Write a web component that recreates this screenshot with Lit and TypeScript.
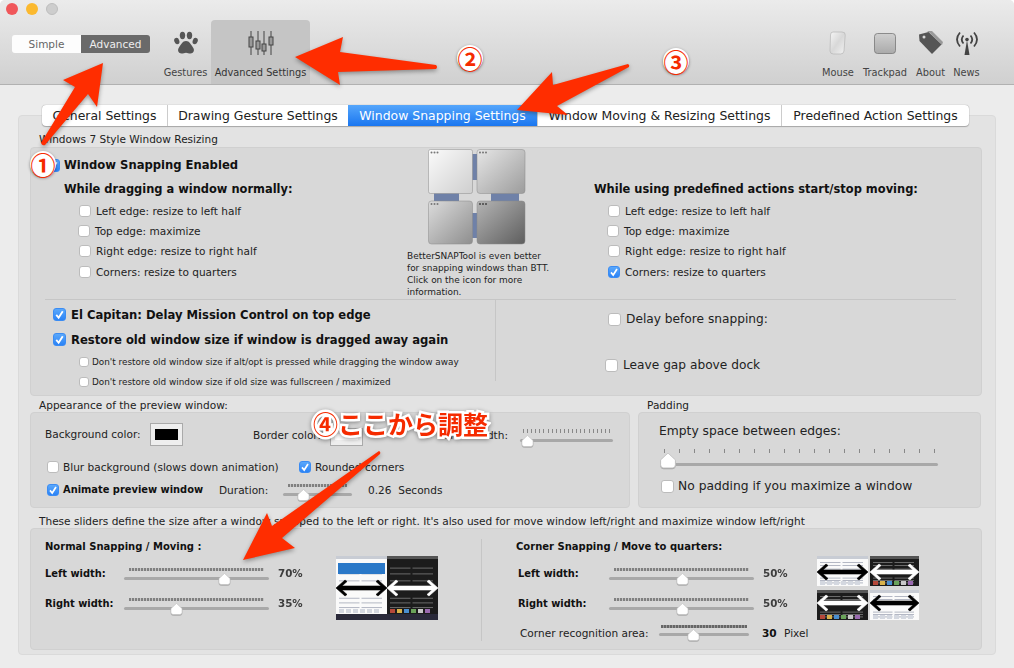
import { LitElement, html, css, svg, TemplateResult } from 'lit';
import { customElement } from 'lit/decorators.js';

const check = (on: boolean, big = false): TemplateResult => html`
  <span class="box ${on ? 'on' : ''} ${big ? 'big' : ''}">
    ${on
      ? html`<svg viewBox="0 0 12 12"><path d="M3 6.4 5.2 9 9 3" fill="none" stroke="#fff" stroke-width="1.7" /></svg>`
      : ''}
  </span>
`;

const slider = (width: number, pct: number, ticks: number, big = false): TemplateResult => html`
  <div class="slider ${big ? 'big' : ''}" style="width:${width}px">
    ${ticks > 0
      ? html`<div class="ticks">${Array.from({ length: ticks }, () => html`<i></i>`)}</div>`
      : html`<div class="ticks dense"></div>`}
    <div class="track"></div>
    <svg class="thumb" style="left:${pct}%" viewBox="0 0 13 13">
      <path d="M6.5 .5 12.5 6v4q0 2.5-2.5 2.5H3Q.5 12.5.5 10V6Z" fill="#fff" stroke="#bbb" stroke-width=".6" />
    </svg>
  </div>
`;

// double headed arrow used on the little preview screenshots
const dblArrow = (x: number, y: number, w: number, color: string) => svg`
  <path d="M${x} ${y}l9-8 2 1.500-5 4.500h${w - 12}l-5-4.500 2-1.500 9 8-9 8-2-1.500 5-4.500h-${w - 12}l5 4.500-2 1.500z" fill="${color}" stroke="${color}" stroke-width=".6" />
`;

const TILES = ['#b5483a', '#d9b24a', '#4a8fd0', '#6aa35a', '#c9c9c9', '#9a6ab0'];

@customElement('app-root')
export class AppRoot extends LitElement {
  static styles = css`
    :host {
      display: block;
      position: relative;
      width: 1014px;
      height: 668px;
      overflow: hidden;
      background: #fff;
      font-family: 'DejaVu Sans', sans-serif;
      font-size: 10.55px;
      color: #222;
    }
    .window {
      height: 668px;
      display: flex;
      flex-direction: column;
      border-radius: 5px 5px 0 0;
      overflow: hidden;
      background: #ececec;
    }
    .toolbar {
      height: 84px;
      flex: none;
      background: linear-gradient(#ebebeb, #d0d0d0);
      border-bottom: 1px solid #b1b1b1;
    }
    .lights {
      height: 20px;
      display: flex;
      gap: 8px;
      padding: 3px 0 0 6px;
      box-sizing: border-box;
    }
    .lights i {
      width: 12px;
      height: 12px;
      border-radius: 50%;
    }
    .lights .r { background: #f0575a; }
    .lights .y { background: #fbb92f; }
    .lights .g { background: #cdcdcd; border: 1px solid #bdbdbd; box-sizing: border-box; }
    .tools {
      height: 64px;
      display: flex;
      padding: 0 32px 0 12px;
    }
    .segment {
      width: 138px;
      height: 18px;
      margin: 15px 10px 0 0;
      display: grid;
      grid-template-columns: 69px 69px;
      text-align: center;
      line-height: 18px;
      font-size: 10.5px;
    }
    .segment .off { background: #fdfdfd; color: #666; border-radius: 3px 0 0 3px; }
    .segment .sel { background: #6a6a6a; color: #eee; border-radius: 0 3px 3px 0; }
    .tool {
      display: flex;
      flex-direction: column;
      align-items: center;
      font-size: 9.8px;
      color: #444;
      white-space: nowrap;
    }
    .tool svg {
      width: 26px;
      height: 26px;
      margin: 10px 0 11px;
      flex: none;
    }
    .tool.gestures { width: 51px; }
    .tool.selected { width: 99px; background: #c5c5c5; border-radius: 4px 4px 0 0; color: #333; }
    .spacer { flex: 1; }
    .tool.mouse { width: 44px; }
    .tool.trackpad { width: 50px; }
    .tool.about { width: 41px; }
    .tool.news { width: 31px; }

    .body {
      flex: 1;
      padding: 20px 18px 13px;
      display: flex;
      flex-direction: column;
    }
    .tabs {
      position: relative;
      z-index: 1;
      align-self: flex-start;
      margin: 0 0 -11px 24px;
      display: grid;
      grid-template-columns: 125px 181px 189px 244px 188px;
      height: 21px;
      background: #fff;
      border-radius: 4px;
      box-shadow: 0 0 1px 0 #888, 0 1px 1px #aaa;
      font-size: 12.45px;
      line-height: 21px;
      text-align: center;
      color: #222;
    }
    .tabs div + div { border-left: 1px solid #ccc; }
    .tabs .active {
      background: linear-gradient(#55a6fb, #1a76f0);
      color: #fff;
      border-left: 0;
    }
    .panel {
      flex: 1;
      background: #e3e3e3;
      border: 1px solid #dadada;
      border-radius: 4px;
      padding: 16px 13px 0 11px;
    }
    .title {
      height: 14px;
      line-height: 14px;
      padding-left: 9px;
      white-space: nowrap;
    }
    .title.first { margin-bottom: 1px; }
    .group {
      background: #d8d8d8;
      border: 1px solid #d0d0d0;
      border-radius: 4px;
      box-sizing: border-box;
    }
    .row {
      display: flex;
      align-items: center;
      gap: 5px;
      white-space: nowrap;
    }
    .box {
      width: 12px;
      height: 12px;
      flex: none;
      box-sizing: border-box;
      background: #fff;
      border: 1px solid #bcbcbc;
      border-radius: 3px;
    }
    .box.big { width: 13px; height: 13px; }
    .box svg { display: block; width: 100%; height: 100%; }
    .box.on { background: linear-gradient(#5aa8fb, #2b83f6); border-color: #3b8cf3; }
    .box.on svg { margin: -1px; width: calc(100% + 2px); height: calc(100% + 2px); }
    b { font-weight: 700; color: #111; }

    .snap { height: 249px; position: relative; }
    .snap-top {
      height: 151px;
      display: grid;
      grid-template-columns: 376px 187px 1fr;
    }
    .snap-left { padding: 7px 0 0 33px; }
    .enabled { height: 20px; font-size: 11.6px; gap: 0; margin-left: -14px; }
    .enabled .box { margin: 0 -3px; }
    .enabled b { margin-left: 7px; }
    h4 {
      margin: 4px 0 2px;
      font-size: 11.45px;
      line-height: 20px;
      font-weight: 700;
      color: #111;
      white-space: nowrap;
    }
    .options { padding-left: 15px; }
    .options .row { height: 20px; }
    .options .row:last-child { height: 21px; }
    .options .row.shift { margin-left: -1px; }
    .snap-mid { padding-top: 1px; }
    .snap-mid svg { display: block; width: 98px; height: 96px; margin-left: 21px; }
    .snap-mid p {
      margin: 5px 0 0;
      font-size: 8.95px;
      line-height: 12px;
      white-space: nowrap;
    }
    .snap-right { padding-top: 27px; }
    .snap-right .options { padding-left: 14px; }
    .rule { height: 1px; background: #c6c6c6; margin: 0 25px 0 14px; }
    .snap-bottom { display: grid; grid-template-columns: 464px 1fr; }
    .snap-bl { padding: 2px 0 0 22px; }
    .big-row { height: 25px; font-size: 11.62px; }
    .sub-row { height: 20px; font-size: 8.87px; padding-left: 26px; gap: 3px; }
    .sub-row .box { width: 10px; height: 10px; }
    .snap-br {
      height: 72px;
      border-left: 1px solid #c6c6c6;
      padding: 9px 0 0 112px;
      font-size: 12.2px;
    }
    .snap-br .row { height: 20px; }
    .snap-br .row + .row { margin: 26px 0 0 -3px; }

    .split {
      display: grid;
      grid-template-columns: 600px 343px;
      gap: 8px;
      margin-top: 2px;
    }
    .appearance { height: 96px; padding: 10px 0 0 14px; }
    .a-row { display: flex; align-items: flex-start; white-space: nowrap; }
    .a-bg { width: 105px; margin-top: 5px; }
    .a-border { width: 77px; margin: 6px 0 0 70px; }
    .a-width { width: 145px; margin-top: 6px; text-align: right; }
    .swatch {
      width: 33px;
      height: 23px;
      box-sizing: border-box;
      padding: 5px 4px 5px 4px;
      background: #eee;
      border: 1px solid #aaa;
    }
    .swatch i { display: block; height: 100%; background: #000; }
    .swatch.light { height: 18px; margin-top: 5px; }
    .swatch.light i { background: #fff; }
    .a-slider { margin: 5px 0 0 12px; }
    .a-check { margin-left: 2px; height: 20px; line-height: 20px; }
    .a-check .cell { width: 252px; display: flex; align-items: center; gap: 4px; }
    .a-check.one { margin-top: 9px; }
    .a-check.two { margin-top: 3px; }
    .a-check.two .cell { width: 172px; }
    .a-check.two .cell b { font-size: 9.9px; }
    .a-check.two .dur { width: 64px; }
    .a-check.two .slider { margin-top: 2px; }
    .a-check.two .val { margin-left: 16px; white-space: pre; }
    .padding-group { height: 96px; padding: 11px 0 0 20px; font-size: 12.3px; }
    .padding-group p { margin: 0; line-height: 14px; }
    .padding-group .slider { margin: 11px 0 0 2px; }
    .padding-group .row { margin: 5px 0 0 2px; height: 20px; gap: 4px; }

    .lead { margin-top: 6px; }
    .sizes { height: 122px; display: flex; }
    .s-left { width: 450px; padding: 9px 0 0 14px; box-sizing: border-box; }
    .vdiv { width: 1px; margin: 10px 0 8px; background: #c6c6c6; }
    .s-right { flex: 1; padding: 9px 0 0 34px; }
    .s-head { height: 18px; line-height: 18px; font-size: 10px; font-weight: 700; color: #111; white-space: nowrap; }
    .s-body { display: flex; align-items: flex-start; padding-top: 10px; }
    .s-rows { flex: none; }
    .s-left .s-rows { width: 291px; }
    .s-right .s-rows { width: 301px; }
    .s-row { display: flex; align-items: flex-start; height: 20px; line-height: 15px; white-space: nowrap; }
    .s-row + .s-row { margin-top: 10px; }
    .s-row b { width: 79px; font-size: 9.9px; }
    .s-right .s-row { margin-left: 2px; }
    .s-right .s-row b { width: 91px; }
    .s-row .pct { margin-left: 9px; font-weight: 700; color: #222; font-size: 10.3px; opacity: .85; }
    .preview { width: 102px; height: 64px; margin-top: -10px; display: block; flex: none; }
    .corner { display: flex; align-items: center; height: 20px; margin: 7px 0 0 4px; white-space: nowrap; }
    .corner .lbl { width: 139px; }
    .corner b { margin-left: 13px; width: 22px; }
    .corner .track { top: 10px; }
    .corner .thumb { top: 6px; }
    .corner .ticks.dense { left: 2px; right: 2px; background: repeating-linear-gradient(90deg, #666 0 2px, #999 2px 3px); }

    .slider { position: relative; height: 20px; flex: none; }
    .ticks {
      position: absolute;
      top: 1px;
      left: 3px;
      right: 3px;
      height: 4px;
      display: flex;
      justify-content: space-between;
    }
    .ticks i { width: 1px; background: #888; }
    .ticks.dense {
      top: 2px;
      left: 5px;
      right: 5px;
      height: 3px;
      background: repeating-linear-gradient(90deg, #808080 0 2px, #c4c4c4 2px 3px);
    }
    .track {
      position: absolute;
      top: 11px;
      left: 0;
      right: 0;
      height: 3px;
      border-radius: 2px;
      background: #a8a8a8;
    }
    .thumb {
      position: absolute;
      top: 7px;
      width: 13px;
      height: 12px;
      margin-left: -6px;
      filter: drop-shadow(0 1px 0 #aaa);
    }
    .slider.big { height: 22px; }
    .slider.big .ticks { top: 0; height: 4px; }
    .slider.big .track { top: 14px; }
    .slider.big .thumb { top: 3px; width: 16px; height: 17px; margin-left: -8px; }

    .marks {
      position: absolute;
      inset: 0;
      width: 1014px;
      height: 668px;
      z-index: 2;
      pointer-events: none;
      filter: drop-shadow(0 2px 2px rgba(0, 0, 0, 0.35));
    }
    .badge {
      position: absolute;
      z-index: 3;
      width: 26px;
      height: 26px;
      border-radius: 50%;
      background: #fff;
      box-shadow: 0 1px 3px rgba(0, 0, 0, 0.45);
      color: #f52b00;
      font: 700 25px/26px 'Noto Sans CJK JP', sans-serif;
      text-align: center;
    }
    .badge.one { left: 30px; top: 151px; }
    .badge.two { left: 457px; top: 45px; }
    .badge.three { left: 663px; top: 48px; }
    .note {
      position: absolute;
      z-index: 3;
      left: 313px;
      top: 405px;
      font: 700 25px/36px 'Noto Sans CJK JP', sans-serif;
      color: #f52b00;
      -webkit-text-stroke: 5px #fff;
      paint-order: stroke fill;
      filter: drop-shadow(0 1px 2px rgba(0, 0, 0, 0.4));
      white-space: nowrap;
    }
  `;

  private snapOptions(last: boolean) {
    return html`
      <div class="options">
        <div class="row">${check(false)}Left edge: resize to left half</div>
        <div class="row shift">${check(false)}Top edge: maximize</div>
        <div class="row">${check(false)}Right edge: resize to right half</div>
        <div class="row">${check(last)}Corners: resize to quarters</div>
      </div>
    `;
  }

  private snapIcon() {
    return html`
      <svg viewBox="0 0 98 96">
        <defs>
          <linearGradient id="w1" x1="0" y1="0" x2="1" y2="1"><stop offset="0" stop-color="#fbfbfb" /><stop offset="1" stop-color="#cfcfcf" /></linearGradient>
          <linearGradient id="w2" x1="0" y1="0" x2="1" y2="1"><stop offset="0" stop-color="#e6e6e6" /><stop offset="1" stop-color="#9c9c9c" /></linearGradient>
          <linearGradient id="w3" x1="0" y1="0" x2="1" y2="1"><stop offset="0" stop-color="#dcdcdc" /><stop offset="1" stop-color="#8e8e8e" /></linearGradient>
          <linearGradient id="w4" x1="0" y1="0" x2="1" y2="1"><stop offset="0" stop-color="#b4b4b4" /><stop offset="1" stop-color="#5e5e5e" /></linearGradient>
        </defs>
        <g fill="#6f81a8">
          <rect x="44" y="5" width="6" height="26" />
          <rect x="6" y="44" width="25" height="9" />
          <rect x="63" y="44" width="28" height="9" />
          <rect x="44" y="64" width="6" height="25" />
        </g>
        <g stroke="#8a8a8a" stroke-width=".5">
          <rect x=".5" y=".5" width="44" height="44" rx="2" fill="url(#w1)" />
          <rect x="49" y=".5" width="48" height="44" rx="3" fill="url(#w2)" />
          <rect x=".5" y="52" width="44" height="43" rx="3" fill="url(#w3)" />
          <rect x="49" y="52" width="48" height="43" rx="3" fill="url(#w4)" />
        </g>
        <g fill="#777">
          <circle cx="3.500" cy="3.500" r="1" /><circle cx="6.500" cy="3.500" r="1" /><circle cx="9.500" cy="3.500" r="1" />
          <circle cx="52" cy="3.500" r="1" /><circle cx="55" cy="3.500" r="1" /><circle cx="58" cy="3.500" r="1" />
          <circle cx="3.500" cy="55" r="1" /><circle cx="6.500" cy="55" r="1" /><circle cx="9.500" cy="55" r="1" />
          <circle cx="52" cy="55" r="1" fill="#444" /><circle cx="55" cy="55" r="1" fill="#444" /><circle cx="58" cy="55" r="1" fill="#444" />
        </g>
      </svg>
    `;
  }

  // fake screenshot: rows of faint text plus a strip of coloured tiles
  private page(x: number, y: number, w: number, h: number, dark: boolean) {
    const lines = [0.2, 0.3, 0.42, 0.72, 0.8, 0.88].flatMap((o) =>
      [0, 1].map(
        (c) => svg`<rect x="${x + 3 + (c * (w - 6)) / 2}" y="${y + o * h}" width="${(w - 10) / 2}" height="1" fill="${dark ? '#6a6a6a' : '#b4b8c4'}" />`
      )
    );
    const tiles = TILES.map(
      (color, i) => svg`<rect x="${x + 3 + i * 7}" y="${y + h - 5}" width="5" height="4" fill="${dark ? color : '#d4d8e0'}" />`
    );
    return svg`
      <rect x="${x}" y="${y}" width="${w}" height="${h}" fill="${dark ? '#1c1c1c' : '#fafafa'}" />
      <rect x="${x}" y="${y}" width="${w}" height="3" fill="${dark ? '#555' : '#c8ccd4'}" />
      ${lines}${tiles}
    `;
  }

  render() {
    return html`
      <div class="window">
        <div class="toolbar">
          <div class="lights"><i class="r"></i><i class="y"></i><i class="g"></i></div>
          <div class="tools">
            <div class="segment"><div class="off">Simple</div><div class="sel">Advanced</div></div>
            <div class="tool gestures">
              <svg viewBox="0 0 26 26" fill="#555">
                <ellipse cx="3.800" cy="11" rx="2.500" ry="3.300" transform="rotate(-20 3.800 11)" />
                <ellipse cx="9.500" cy="5.500" rx="2.700" ry="3.700" />
                <ellipse cx="16.500" cy="5.500" rx="2.700" ry="3.700" />
                <ellipse cx="22.200" cy="11" rx="2.500" ry="3.300" transform="rotate(20 22.200 11)" />
                <path d="M13 11c-3.500 0-5 3.500-7 6.500-2 2.800-.5 6 2.500 6 1.800 0 3-.8 4.500-.8s2.700.8 4.500.8c3 0 4.500-3.200 2.500-6-2-3-3.500-6.500-7-6.500z" />
              </svg>
              Gestures
            </div>
            <div class="tool selected">
              <svg viewBox="0 0 26 26" fill="#999" stroke="#444" stroke-width="1">
                <path d="M3 1v24M10 1v24M16 1v24M23 1v24" fill="none" />
                <rect x="1" y="7" width="4" height="10" /><rect x="8" y="11" width="4" height="8" />
                <rect x="14" y="14" width="4" height="7" /><rect x="21" y="7" width="4" height="8" />
              </svg>
              Advanced Settings
            </div>
            <div class="spacer"></div>
            <div class="tool mouse">
              <svg viewBox="0 0 26 26">
                <defs><linearGradient id="ms" x1="0" y1="0" x2="1" y2="1"><stop offset="0" stop-color="#f6f6f6" /><stop offset=".5" stop-color="#d8d8d8" /><stop offset="1" stop-color="#f2f2f2" /></linearGradient></defs>
                <path d="M8 2h9q3.500 0 3.200 3L19 21q-.3 3-3.500 3H8.500Q5 24 5 21L5.500 5Q5.500 2 8 2z" fill="url(#ms)" stroke="#b4b4b4" stroke-width=".7" />
              </svg>
              Mouse
            </div>
            <div class="tool trackpad">
              <svg viewBox="0 0 26 26">
                <defs><linearGradient id="tp" x1="0" y1="0" x2="0" y2="1"><stop offset="0" stop-color="#cfcfcf" /><stop offset="1" stop-color="#aaa" /></linearGradient></defs>
                <rect x="2.500" y="3.500" width="21" height="20" rx="3" fill="url(#tp)" stroke="#777" stroke-width=".8" />
              </svg>
              Trackpad
            </div>
            <div class="tool about">
              <svg viewBox="0 0 26 26">
                <path d="M9 1h5l11 11-1 3L12 3z" fill="#999" />
                <path d="M1 4.500 1.500 11 14 24l9.500-9.500L10.500 2z" fill="#555" />
                <circle cx="6" cy="7" r="1.500" fill="#d8d8d8" />
              </svg>
              About
            </div>
            <div class="tool news">
              <svg viewBox="0 0 26 26" fill="none" stroke="#444" stroke-width="1.800">
                <path d="M6 2.500q-6 7 0 14M20 2.500q6 7 0 14M9.500 5.500q-3.500 4 0 8M16.500 5.500q3.500 4 0 8" />
                <circle cx="13" cy="9.500" r="1.800" fill="#444" stroke="none" />
                <path d="M13 10 10.500 25h5z" fill="#444" stroke="none" />
              </svg>
              News
            </div>
          </div>
        </div>

        <div class="body">
          <div class="tabs">
            <div>General Settings</div>
            <div>Drawing Gesture Settings</div>
            <div class="active">Window Snapping Settings</div>
            <div>Window Moving &amp; Resizing Settings</div>
            <div>Predefined Action Settings</div>
          </div>
          <div class="panel">
            <div class="title first">Windows 7 Style Window Resizing</div>
            <div class="group snap">
              <div class="snap-top">
                <div class="snap-left">
                  <div class="row enabled">${check(true, true)}<b>Window Snapping Enabled</b></div>
                  <h4>While dragging a window normally:</h4>
                  ${this.snapOptions(false)}
                </div>
                <div class="snap-mid">
                  ${this.snapIcon()}
                  <p>BetterSNAPTool is even better<br />for snapping windows than BTT.<br />Click on the icon for more<br />information.</p>
                </div>
                <div class="snap-right">
                  <h4>While using predefined actions start/stop moving:</h4>
                  ${this.snapOptions(true)}
                </div>
              </div>
              <div class="rule"></div>
              <div class="snap-bottom">
                <div class="snap-bl">
                  <div class="row big-row">${check(true, true)}<b>El Capitan: Delay Mission Control on top edge</b></div>
                  <div class="row big-row">${check(true, true)}<b>Restore old window size if window is dragged away again</b></div>
                  <div class="row sub-row">${check(false)}Don't restore old window size if alt/opt is pressed while dragging the window away</div>
                  <div class="row sub-row">${check(false)}Don't restore old window size if old size was fullscreen / maximized</div>
                </div>
                <div class="snap-br">
                  <div class="row">${check(false, true)}Delay before snapping:</div>
                  <div class="row">${check(false, true)}Leave gap above dock</div>
                </div>
              </div>
            </div>

            <div class="split">
              <div>
                <div class="title">Appearance of the preview window:</div>
                <div class="group appearance">
                  <div class="a-row">
                    <div class="a-bg">Background color:</div>
                    <div class="swatch"><i></i></div>
                    <div class="a-border">Border color:</div>
                    <div class="swatch light"><i></i></div>
                    <div class="a-width">Border width:</div>
                    <div class="a-slider">${slider(93, 8, 22)}</div>
                  </div>
                  <div class="a-row a-check one">
                    <div class="cell">${check(false)}Blur background (slows down animation)</div>
                    <div class="cell">${check(true)}Rounded corners</div>
                  </div>
                  <div class="a-row a-check two">
                    <div class="cell">${check(true)}<b>Animate preview window</b></div>
                    <div class="dur">Duration:</div>
                    ${slider(69, 29, 0)}
                    <div class="val">0.26  Seconds</div>
                  </div>
                </div>
              </div>
              <div>
                <div class="title">Padding</div>
                <div class="group padding-group">
                  <p>Empty space between edges:</p>
                  ${slider(277, 2.5, 19, true)}
                  <div class="row">${check(false, true)}No padding if you maximize a window</div>
                </div>
              </div>
            </div>

            <div class="title lead">These sliders define the size after a window snapped to the left or right. It's also used for move window left/right and maximize window left/right</div>
            <div class="group sizes">
              <div class="s-left">
                <div class="s-head">Normal Snapping / Moving :</div>
                <div class="s-body">
                  <div class="s-rows">
                    <div class="s-row"><b>Left width:</b>${slider(145, 69, 0)}<span class="pct">70%</span></div>
                    <div class="s-row"><b>Right width:</b>${slider(145, 36, 0)}<span class="pct">35%</span></div>
                  </div>
                  <svg class="preview" viewBox="0 0 102 64">
                    ${this.page(0, 0, 51, 58, false)}${this.page(51, 0, 51, 58, true)}
                    <rect x="2" y="7" width="47" height="11" fill="#2a78c8" />
                    <rect x="0" y="58" width="102" height="6" fill="#2a2a3a" />
                    ${dblArrow(0, 32, 51, '#000')}${dblArrow(51, 32, 51, '#fff')}
                  </svg>
                </div>
              </div>
              <div class="vdiv"></div>
              <div class="s-right">
                <div class="s-head">Corner Snapping / Move to quarters:</div>
                <div class="s-body">
                  <div class="s-rows">
                    <div class="s-row"><b>Left width:</b>${slider(145, 50, 0)}<span class="pct">50%</span></div>
                    <div class="s-row"><b>Right width:</b>${slider(145, 50, 0)}<span class="pct">50%</span></div>
                    <div class="corner">
                      <span class="lbl">Corner recognition area:</span>${slider(90, 38, 0)}<b>30</b>Pixel
                    </div>
                  </div>
                  <svg class="preview" viewBox="0 0 102 64">
                    ${this.page(0, 0, 51, 30, false)}${this.page(53, 0, 49, 30, true)}
                    ${this.page(0, 34, 51, 30, true)}${this.page(53, 34, 49, 30, false)}
                    ${dblArrow(0, 16, 51, '#000')}${dblArrow(53, 16, 49, '#fff')}
                    ${dblArrow(0, 47, 51, '#fff')}${dblArrow(53, 47, 49, '#000')}
                  </svg>
                </div>
              </div>
            </div>
          </div>
        </div>
      </div>

      <svg class="marks" viewBox="0 0 1014 668" fill="#ff2d00">
        <path d="M103 63 63 80 75 87 41 143q1 3 4 2L88 94l9 13z" />
        <path d="M295 57 343 37 340 52 436 65q2 2 0 4L338 72l2 13z" />
        <path d="M517 110 552 72l1 13 75-21q2 1 1 3L557 106l11 9z" />
        <path d="M243 560 267 513l5 13 107-75q2 1 1 3L282 538l13 10z" />
      </svg>
      <div class="badge one">①</div>
      <div class="badge two">②</div>
      <div class="badge three">③</div>
      <div class="note">④ここから調整</div>
    `;
  }
}
